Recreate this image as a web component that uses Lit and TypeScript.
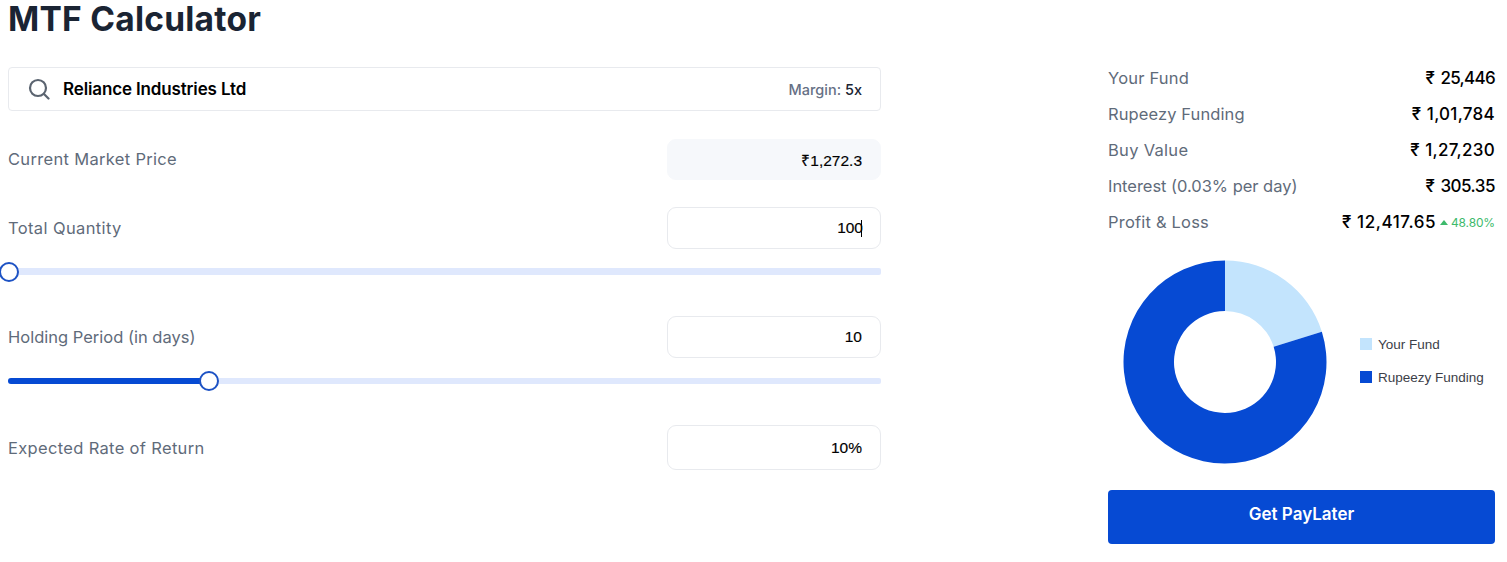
import { LitElement, html, css, svg } from "lit";
import { customElement } from "lit/decorators.js";

const R = "\u20B9";

@customElement("app-root")
export class AppRoot extends LitElement {
  static styles = css`
    :host { display: block; width: 1507px; height: 562px; background: #fff; overflow: hidden; font-family: "Inter", "Noto Sans", sans-serif; color: #000; }
    .page { padding: 0 12px 0 8px; }
    h1 { margin: 0; height: 60px; font-size: 33.5px; line-height: 39px; font-weight: 700; color: #1a2433; letter-spacing: 0.25px; }
    .main { display: flex; justify-content: space-between; }
    .left { width: 873px; padding-top: 7px; display: flex; flex-direction: column; }
    .right { width: 387px; display: flex; flex-direction: column; }
    .search { height: 44px; box-sizing: border-box; border: 1px solid #e8eaee; border-radius: 4px; display: flex; align-items: center; padding: 0 18px 0 19px; margin-bottom: 28px; }
    .search svg { width: 22px; height: 22px; margin-right: 13px; }
    .stock { font-size: 17px; font-weight: 600; flex: 1; letter-spacing: -0.14px; }
    .margin { font-size: 14.5px; font-weight: 500; color: #667085; }
    .margin b { font-weight: 500; color: #1a2433; }
    .row { display: flex; justify-content: space-between; align-items: center; }
    .label { font-size: 16.5px; color: #5f6b7a; font-weight: 400; }
    .ls-cmp { letter-spacing: 0.32px; position: relative; top: -1px; }
    .ls-tq { letter-spacing: 0.38px; }
    .ls-hp { letter-spacing: 0; }
    .ls-err { letter-spacing: 0.33px; }
    .ls-yf { letter-spacing: 0.2px; }
    .ls-rf { letter-spacing: 0.1px; }
    .ls-bv { letter-spacing: 0.3px; }
    .ls-int { letter-spacing: -0.03px; }
    .ls-pl { letter-spacing: 0.2px; }
    .box { width: 214px; box-sizing: border-box; border: 1px solid #e8eaee; border-radius: 9px; display: flex; align-items: center; justify-content: flex-end; padding-right: 18px; font-family: "Liberation Sans", Arial, sans-serif; font-size: 15.5px; font-weight: 400; -webkit-text-stroke: 0.15px #000; }
    .box.ro { background: #f6f8fb; border-color: #f6f8fb; margin-bottom: 0; }
    .h41 { height: 41px; margin-bottom: 27px; }
    .h42 { height: 42px; }
    .h45 { height: 45px; }
    .caret { display: inline-block; width: 1px; height: 17px; background: #000; margin-left: -2px; }
    .track { position: relative; height: 7px; background: #dfe8fd; border-radius: 2px; }
    .t1 { margin: 19px 0 41px; }
    .t2 { margin: 20px 0 41px; height: 6px; }
    .fill { height: 100%; background: #064ad3; border-radius: 4px; }
    .thumb { position: absolute; top: 50%; width: 20px; height: 20px; box-sizing: border-box; border-radius: 50%; background: #fff; border: 2px solid #1d52c4; transform: translate(-50%, -50%); }
    .stat { height: 36px; display: flex; align-items: center; justify-content: space-between; }
    .val { font-size: 17px; font-weight: 500; display: flex; align-items: center; white-space: pre; }
    .cur { display: inline-block; width: 15px; letter-spacing: 0; }
    .v-a { letter-spacing: -0.7px; }
    .v-b { letter-spacing: 0.28px; }
    .v-c { letter-spacing: -0.5px; }
    .v-d { letter-spacing: 0.55px; }
    .gain { display: inline-flex; align-items: center; font-size: 12px; color: #3dba6c; font-weight: 400; margin-left: 4px; letter-spacing: -0.15px; }
    .gain svg { width: 8px; height: 5px; margin-right: 3px; }
    .chart { display: flex; align-items: center; padding: 20px 0 26px 15px; }
    .chart svg.donut { width: 204px; height: 204px; display: block; }
    .legend { display: flex; flex-direction: column; gap: 17px; margin-left: 33px; font-family: "Liberation Sans", Arial, sans-serif; font-size: 13.5px; color: #3c4048; margin-top: -3px; }
    .legend div { display: flex; align-items: center; height: 16px; }
    .sw { width: 12px; height: 12px; margin-right: 6px; }
    .sw-light { background: #c3e4fd; }
    .sw-dark { background: #064ad3; }
    button { height: 54px; border: 0; border-radius: 4px; background: #064ad3; color: #fff; font-family: inherit; font-size: 17px; font-weight: 600; padding: 0 0 6px; }
  `;

  slider(pos: number, cls: string) {
    return html`<div class="track ${cls}">
      <div class="fill" style="width:${pos}px"></div>
      <div class="thumb" style="left:${pos + 1}px"></div>
    </div>`;
  }

  donut() {
    const cx = 102, cy = 102, ro = 101.5, ri = 51;
    const a = (72.6 * Math.PI) / 180;
    const x1 = cx + ro * Math.sin(a), y1 = cy - ro * Math.cos(a);
    const x2 = cx + ri * Math.sin(a), y2 = cy - ri * Math.cos(a);
    const light = `M${cx} ${cy - ro}A${ro} ${ro} 0 0 1 ${x1} ${y1}L${x2} ${y2}A${ri} ${ri} 0 0 0 ${cx} ${cy - ri}Z`;
    const dark = `M${x1} ${y1}A${ro} ${ro} 0 1 1 ${cx} ${cy - ro}L${cx} ${cy - ri}A${ri} ${ri} 0 1 0 ${x2} ${y2}Z`;
    return html`<svg class="donut" viewBox="0 0 204 204">${svg`<path d=${light} fill="#c3e4fd"/><path d=${dark} fill="#064ad3"/>`}</svg>`;
  }

  render() {
    return html`<div class="page">
      <h1>MTF Calculator</h1>
      <div class="main">
        <div class="left">
          <div class="search">
            <svg viewBox="0 0 22 22" fill="none" stroke="#5b6470" stroke-width="2.2" stroke-linecap="round"><circle cx="10" cy="10" r="8"/><path d="M16 16l4.5 4.5"/></svg>
            <span class="stock">Reliance Industries Ltd</span>
            <span class="margin">Margin: <b>5x</b></span>
          </div>
          <div class="row h41">
            <span class="label ls-cmp">Current Market Price</span>
            <div class="box ro h41">${R}1,272.3</div>
          </div>
          <div class="row">
            <span class="label ls-tq">Total Quantity</span>
            <div class="box h42">100<i class="caret"></i></div>
          </div>
          ${this.slider(0, "t1")}
          <div class="row">
            <span class="label ls-hp">Holding Period (in days)</span>
            <div class="box h42">10</div>
          </div>
          ${this.slider(200, "t2")}
          <div class="row">
            <span class="label ls-err">Expected Rate of Return</span>
            <div class="box h45">10%</div>
          </div>
        </div>
        <div class="right">
          <div class="stat"><span class="label ls-yf">Your Fund</span><span class="val"><span class="cur">${R}</span><span class="v-a">25,446</span></span></div>
          <div class="stat"><span class="label ls-rf">Rupeezy Funding</span><span class="val"><span class="cur">${R}</span><span class="v-b">1,01,784</span></span></div>
          <div class="stat"><span class="label ls-bv">Buy Value</span><span class="val"><span class="cur">${R}</span><span class="v-b">1,27,230</span></span></div>
          <div class="stat"><span class="label ls-int">Interest (0.03% per day)</span><span class="val"><span class="cur">${R}</span><span class="v-c">305.35</span></span></div>
          <div class="stat"><span class="label ls-pl">Profit &amp; Loss</span><span class="val"><span class="cur">${R}</span><span class="v-d">12,417.65</span><span class="gain"><svg viewBox="0 0 8 5"><path d="M4 0L8 5H0Z" fill="#3dba6c"/></svg>48.80%</span></span></div>
          <div class="chart">
            ${this.donut()}
            <div class="legend">
              <div><span class="sw sw-light"></span>Your Fund</div>
              <div><span class="sw sw-dark"></span>Rupeezy Funding</div>
            </div>
          </div>
          <button>Get PayLater</button>
        </div>
      </div>
    </div>`;
  }
}
